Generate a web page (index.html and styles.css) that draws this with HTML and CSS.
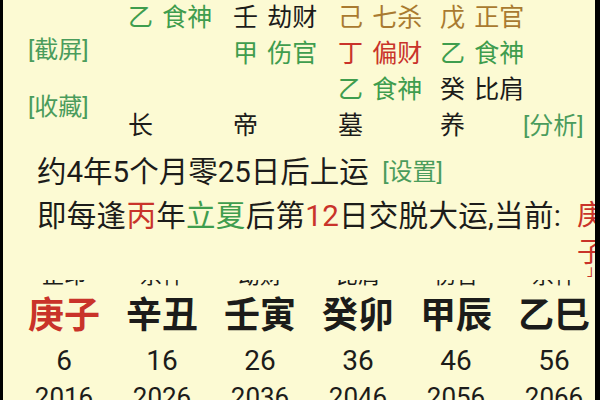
FILE: index.html
```html
<!DOCTYPE html>
<html lang="zh">
<head>
<meta charset="utf-8">
<link rel="stylesheet" href="styles.css">
</head>
<body>
<div class="screen">
  <section class="pillars">
    <div class="side">
      <span class="tag">[截屏]</span>
      <span class="tag">[收藏]</span>
    </div>
    <div class="grid">
      <span class="cell green">乙 食神</span>
      <span class="cell">壬 劫财</span>
      <span class="cell brown">己 七杀</span>
      <span class="cell brown">戊 正官</span>

      <span class="cell"></span>
      <span class="cell green">甲 伤官</span>
      <span class="cell red">丁 偏财</span>
      <span class="cell green">乙 食神</span>

      <span class="cell"></span>
      <span class="cell"></span>
      <span class="cell green">乙 食神</span>
      <span class="cell">癸 比肩</span>

      <span class="cell">长</span>
      <span class="cell">帝</span>
      <span class="cell">墓</span>
      <span class="cell">养</span>
    </div>
    <div class="side-right">
      <span class="tag">[分析]</span>
    </div>
  </section>

  <div class="line line1">约4年5个月零25日后上运 <span class="tag set">[设置]</span></div>
  <div class="line line2">
    <span class="txt">即每逢<span class="red">丙</span>年<span class="green">立夏</span>后第<span class="red">12</span>日交脱大运,当前:</span>
    <span class="cur red">庚子<span class="tail">」</span></span>
  </div>

  <section class="dayun">
    <div class="drow shishen">
      <span>正印</span><span>杀神</span><span>劫财</span><span>比肩</span><span>伤官</span><span>杀神</span>
    </div>
    <div class="drow gz">
      <span class="red">庚子</span><span>辛丑</span><span>壬寅</span><span>癸卯</span><span>甲辰</span><span>乙巳</span>
    </div>
    <div class="drow age">
      <span>6</span><span>16</span><span>26</span><span>36</span><span>46</span><span>56</span>
    </div>
    <div class="drow year">
      <span>2016</span><span>2026</span><span>2036</span><span>2046</span><span>2056</span><span>2066</span>
    </div>
  </section>
</div>
</body>
</html>
```

FILE: styles.css
```css
* { box-sizing: border-box; }
html, body {
  margin: 0;
  padding: 0;
  background: #000;
}
body {
  width: 600px;
  height: 400px;
  overflow: hidden;
  font-family: Roboto, "Noto Sans CJK SC", sans-serif;
  color: #1c1c1a;
}
.screen {
  margin-left: 3px;
  width: 592px;
  height: 400px;
  background: #fcfad3;
  overflow: hidden;
}
.green { color: #3f9d4e; }
.red { color: #c9332a; }
.brown { color: #a97a30; }

.tag {
  font-size: 24px;
  line-height: 26px;
  color: #4a9c5c;
}

.pillars {
  display: flex;
  padding-left: 25px;
  height: 144px;
}
.side {
  width: 100px;
  display: flex;
  flex-direction: column;
  gap: 31px;
  padding-top: 37px;
}
.grid {
  display: grid;
  grid-template-columns: 105px 105px 102px 83px;
  grid-auto-rows: 36px;
  font-size: 25px;
  line-height: 36px;
  word-spacing: 3px;
}
.cell { white-space: nowrap; }
.side-right {
  display: flex;
  align-items: flex-end;
  padding-bottom: 5px;
}

.line {
  font-size: 29.5px;
  line-height: 44px;
  height: 44px;
  padding-left: 34px;
  white-space: nowrap;
}
.line1 { margin-top: 6px; }
.line .set { margin-left: 6px; vertical-align: 2px; }
.line2 {
  display: flex;
  justify-content: space-between;
  align-items: flex-start;
}
.txt { letter-spacing: 0.3px; }
.cur {
  width: 22px;
  white-space: normal;
  word-break: break-all;
  line-height: 37px;
  font-size: 28px;
  margin-top: 3px;
  margin-right: -4px;
  position: relative;
  z-index: 1;
}
.tail {
  font-size: 14px;
  line-height: 14px;
  display: block;
  margin-top: -8px;
  padding-left: 10px;
}

.dayun {
  margin-top: 42px;
}
.drow {
  display: grid;
  grid-template-columns: repeat(6, 98px);
  padding-left: 12px;
  text-align: center;
  white-space: nowrap;
}
.shishen {
  font-size: 22px;
  line-height: 22px;
  height: 7px;
  overflow: hidden;
}
.shishen span { margin-top: -15px; }
.gz {
  font-size: 36px;
  font-weight: bold;
  line-height: 42px;
  margin-top: 8px;
}
.age {
  font-size: 28px;
  line-height: 36px;
  margin-top: 6px;
}
.year {
  font-size: 26px;
  line-height: 34px;
  margin-top: 1px;
}
```
